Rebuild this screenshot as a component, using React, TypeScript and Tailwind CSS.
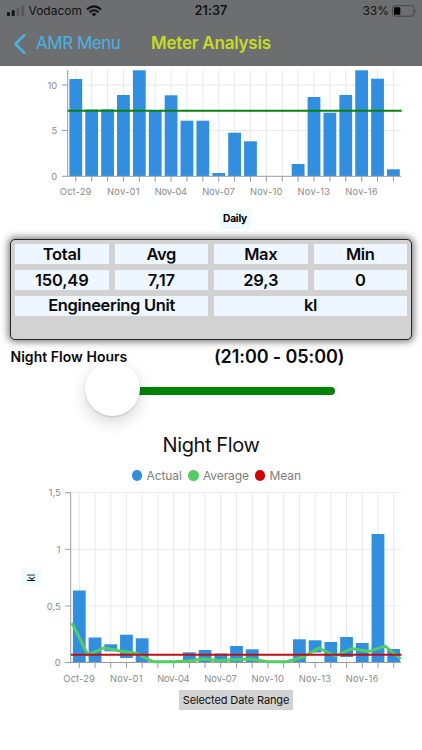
import React from "react";

type Bar = { x: number; top: number; bottom: number };

const dates = ["Oct-29", "Nov-01", "Nov-04", "Nov-07", "Nov-10", "Nov-13", "Nov-16"];
const slots = Array.from({ length: 21 }, (_, i) => i);

// bar tops in chart pixels, null where the day has no reading
const dailyTops = [
  13, 43.5, 43.3, 29, 4.3, 44.5, 29.3, 54.7, 54.7, 107, 66.7, 75.3, null, null, 98, 31, 46.7, 29, 4.3, 12.7, 103.3,
];

// [top, bottom] of each night flow bar
const nightBars: ([number, number] | null)[] = [
  [104.5, 176], [151.5, 176], [158.3, 165.3], [148.7, 172], [152.3, 176], null, null,
  [166.3, 176], [164, 176], [167.5, 176], [160, 176], [163.3, 176], null, null,
  [153.3, 176], [154.3, 166.5], [156, 176], [151, 171], [157, 176], [48, 176], [163, 176],
];

const stats = [
  ["Total", "150,49"],
  ["Avg", "7,17"],
  ["Max", "29,3"],
  ["Min", "0"],
];

const legend = [
  { label: "Actual", dot: "bg-[#328fdf]", width: "w-[35px]" },
  { label: "Average", dot: "bg-[#53cc62]", width: "w-[45px]" },
  { label: "Mean", dot: "bg-[#cc0505]", width: "w-[31px]" },
];

const Bars = ({ bars }: { bars: Bar[] }) => (
  <g fill="#328fdf">
    {bars.map((b) => (
      <rect key={b.x} x={b.x - 6.4} y={b.top} width="12.8" height={b.bottom - b.top} />
    ))}
  </g>
);

const Labels = ({ start, step, y }: { start: number; step: number; y: number }) => (
  <g fill="#8b8b8b" fontSize="9.4" textAnchor="middle">
    {dates.map((d, i) => (
      <text key={d} x={start + i * 3 * step} y={y} textLength={i === 0 ? 31.5 : 32.5}>
        {d}
      </text>
    ))}
  </g>
);

const DailyChart = () => {
  const x = (i: number) => 75.8 + i * 15.88;
  const bars = dailyTops.flatMap((top, i) => (top === null ? [] : [{ x: x(i), top, bottom: 110 }]));
  return (
    <svg className="block h-[136px] w-full" viewBox="0 0 422 136">
      <g stroke="#e3e3e3" strokeWidth="0.8">
        {slots.map((i) => (
          <path key={i} d={`M${x(i)} 4V110`} />
        ))}
        <path d="M68 19.1H401M68 64.5H401" />
      </g>
      <Bars bars={bars} />
      <g stroke="#9b9b9b" strokeWidth="1" fill="none">
        <path d="M67.7 4V110.3H401.3M62 19.1H67.7M62 64.5H67.7M62 110.3H67.7" />
        {slots.map((i) => (
          <path key={i} d={`M${x(i)} 110V115.5`} />
        ))}
      </g>
      <path d="M67.7 44.8H401.7" stroke="#0b800f" strokeWidth="2.1" />
      <g fill="#8b8b8b" fontSize="9.4" textAnchor="end">
        <text x="57.2" y="22.6">10</text>
        <text x="57.2" y="68">5</text>
        <text x="57.2" y="113.6">0</text>
      </g>
      <Labels start={75.6} step={15.88} y={129.2} />
    </svg>
  );
};

const NightChart = () => {
  const x = (i: number) => 79.3 + i * 15.72;
  const bars = nightBars.flatMap((b, i) => (b ? [{ x: x(i), top: b[0], bottom: b[1] }] : []));
  return (
    <svg className="block h-[203px] w-full" viewBox="0 0 422 203">
      <g stroke="#e3e3e3" strokeWidth="0.8">
        {slots.map((i) => (
          <path key={i} d={`M${x(i)} 6.7V176`} />
        ))}
        <path d="M71 6.7H401.3M71 63.3H401.3M71 120H401.3" />
      </g>
      <Bars bars={bars} />
      <g stroke="#9b9b9b" strokeWidth="1" fill="none">
        <path d="M70.7 6.5V176.5H401.3M65 6.7H70.7M65 63.3H70.7M65 120H70.7M65 176.5H70.7" />
        {slots.map((i) => (
          <path key={i} d={`M${x(i)} 176.5V182`} />
        ))}
      </g>
      <path
        d="M72 137L88 169L104 161.8L120 165L137 167.5L153 175.7H175L188 175L204 173L217 174.5L250 173L268 175.8H286L303 171L319 162L335 170L352 162.5L369 165.5L385 160L400.7 173"
        fill="none"
        stroke="#53cc62"
        strokeWidth="2.9"
        strokeLinejoin="round"
      />
      <path d="M71 168.7H401.5" stroke="#c00d16" strokeWidth="2.1" />
      <g fill="#8b8b8b" fontSize="9.4" textAnchor="end">
        <text x="60.7" y="10.2">1,5</text>
        <text x="60.7" y="66.8">1</text>
        <text x="60.7" y="123.5">0,5</text>
        <text x="60.7" y="180">0</text>
      </g>
      <Labels start={79.1} step={15.72} y={195.5} />
      <rect x="21" y="83.5" width="20" height="16" fill="#edfdff" />
      <text transform="translate(34.7 91.7) rotate(-90)" fontSize="10" fill="#111" textAnchor="middle">
        kl
      </text>
    </svg>
  );
};

const Header = () => (
  <header className="h-[65.5px] bg-[#6d6e70]">
    <div className="grid h-5 grid-cols-3 items-center pt-0.5 text-[12px] text-[#111]">
      <div className="flex items-center pl-[7px]">
        <svg width="18" height="12" viewBox="0 0 18 12">
          <rect x="0" y="7.3" width="3" height="3.7" rx=".8" fill="#111" />
          <rect x="4.7" y="5.3" width="3" height="5.7" rx=".8" fill="#111" />
          <rect x="9.5" y="3" width="3" height="8" rx=".8" fill="#58595b" />
          <rect x="14.3" y="0.5" width="3" height="10.5" rx=".8" fill="#58595b" />
        </svg>
        <span className="ml-[3.5px] w-[54px] text-[12px]">Vodacom</span>
        <svg className="ml-[3px]" width="16" height="12" viewBox="0 0 16 12" fill="none" stroke="#111" strokeWidth="2">
          <path d="M.9 4.5Q8-1.8 15.1 4.5M3.6 7.2Q8 3.4 12.4 7.2" />
          <path d="M5.5 9Q8 7 10.5 9L8 11.5Z" fill="#111" stroke="none" />
        </svg>
      </div>
      <span className="text-center text-[12.5px] font-semibold tracking-[0.1px]">21:37</span>
      <div className="flex items-center justify-end pr-[5px]">
        <span className="mr-[3px] text-[12px]">33%</span>
        <svg width="25" height="12" viewBox="0 0 25 12">
          <rect x=".5" y=".7" width="21.5" height="10.5" rx="2.8" fill="none" stroke="#444547" />
          <rect x="2" y="2.3" width="6.3" height="7.4" rx="1" fill="#050505" />
          <path d="M23.2 4.3Q25 6 23.2 7.7Z" fill="#444547" />
        </svg>
      </div>
    </div>
    <div className="flex h-[46px] items-center pt-px pl-[13px]">
      <svg width="13" height="20" viewBox="0 0 13 20" fill="none" stroke="#4bb2e6" strokeWidth="2.5">
        <path d="M11.3 1.2L2.5 10L11.3 18.8" strokeLinecap="round" strokeLinejoin="round" />
      </svg>
      <span className="ml-[10px] w-[115px] text-[17px] tracking-[-0.48px] whitespace-nowrap text-[#4bb2e6]">
        AMR Menu
      </span>
      <h1 className="text-[17px] font-semibold tracking-[-0.22px] text-[#c6dc24]">Meter Analysis</h1>
    </div>
  </header>
);

const StatsPanel = () => (
  <section className="mx-[10px] mt-[10.5px] h-[100.5px] rounded-[5px] border border-[#222] bg-[#d2d2d2] px-[4px] pt-[4px] text-center text-[16.5px] font-semibold text-[#0b0b0b] shadow-[0_0_7px_2px_rgba(0,0,0,0.5)]">
    <div className="grid grid-cols-4 gap-x-[6px] gap-y-[6px] leading-5">
      {stats.map(([name]) => (
        <div key={name} className="h-5 bg-[#eef6ff] tracking-[-0.3px]">{name}</div>
      ))}
      {stats.map(([name, value]) => (
        <div key={name} className="h-5 bg-[#eef6ff] tracking-[-0.15px]">{value}</div>
      ))}
      <div className="col-span-2 h-[19.5px] bg-[#eef6ff] leading-[19px] tracking-[-0.35px]">Engineering Unit</div>
      <div className="col-span-2 h-[19.5px] bg-[#eef6ff] leading-[19px] tracking-[-0.3px]">kl</div>
    </div>
  </section>
);

const App = () => {
  return (
    <main className="h-[750px] w-[422px] overflow-hidden bg-white font-['Inter','Liberation_Sans',sans-serif]">
      <Header />
      <DailyChart />
      <div className="flex h-[27px] items-end justify-center pl-12">
        <span className="flex h-5 w-[31px] items-center justify-center bg-[#edfdff] text-[10.2px] font-bold tracking-[-0.2px]">
          Daily
        </span>
      </div>

      <StatsPanel />

      <section className="h-[87px]">
        <div className="flex h-[34px] items-center pl-[10.5px] text-[#0b0b0b]">
          <span className="w-[203.5px] text-[14px] font-semibold tracking-[0.03px]">Night Flow Hours</span>
          <span className="text-[18px] font-semibold tracking-[-0.1px]">(21:00 - 05:00)</span>
        </div>
        <div className="-mt-[13px] flex h-[56px] items-center pl-[85px]">
          <div className="z-10 size-[55px] shrink-0 rounded-full bg-white shadow-[0_6px_16px_rgba(0,0,0,0.16),0_1px_2px_rgba(0,0,0,0.14)]" />
          <div className="mt-[5px] -ml-1 h-2 w-[199px] rounded-full bg-[#048204]" />
        </div>
      </section>

      <h2 className="flex h-9 items-center justify-center text-[20px] tracking-[-0.4px] text-[#111]">Night Flow</h2>
      <div className="mt-[3px] flex h-5 items-center pl-[131.5px] text-[12px] tracking-[-0.1px] text-[#7d7d7d]">
        {legend.map((item) => (
          <div key={item.label} className="mr-[6.5px] flex items-center gap-[4.5px]">
            <span className={`size-[10.5px] rounded-full ${item.dot}`} />
            <span className={item.width}>{item.label}</span>
          </div>
        ))}
      </div>
      <NightChart />
      <div className="flex justify-center pt-px pl-[50px]">
        <span className="flex h-5 w-[114px] items-center justify-center bg-[#d2d2d2] pt-0.5 text-[11px] tracking-[-0.1px] whitespace-nowrap text-[#111]">
          Selected Date Range
        </span>
      </div>
    </main>
  );
};

export default App;
